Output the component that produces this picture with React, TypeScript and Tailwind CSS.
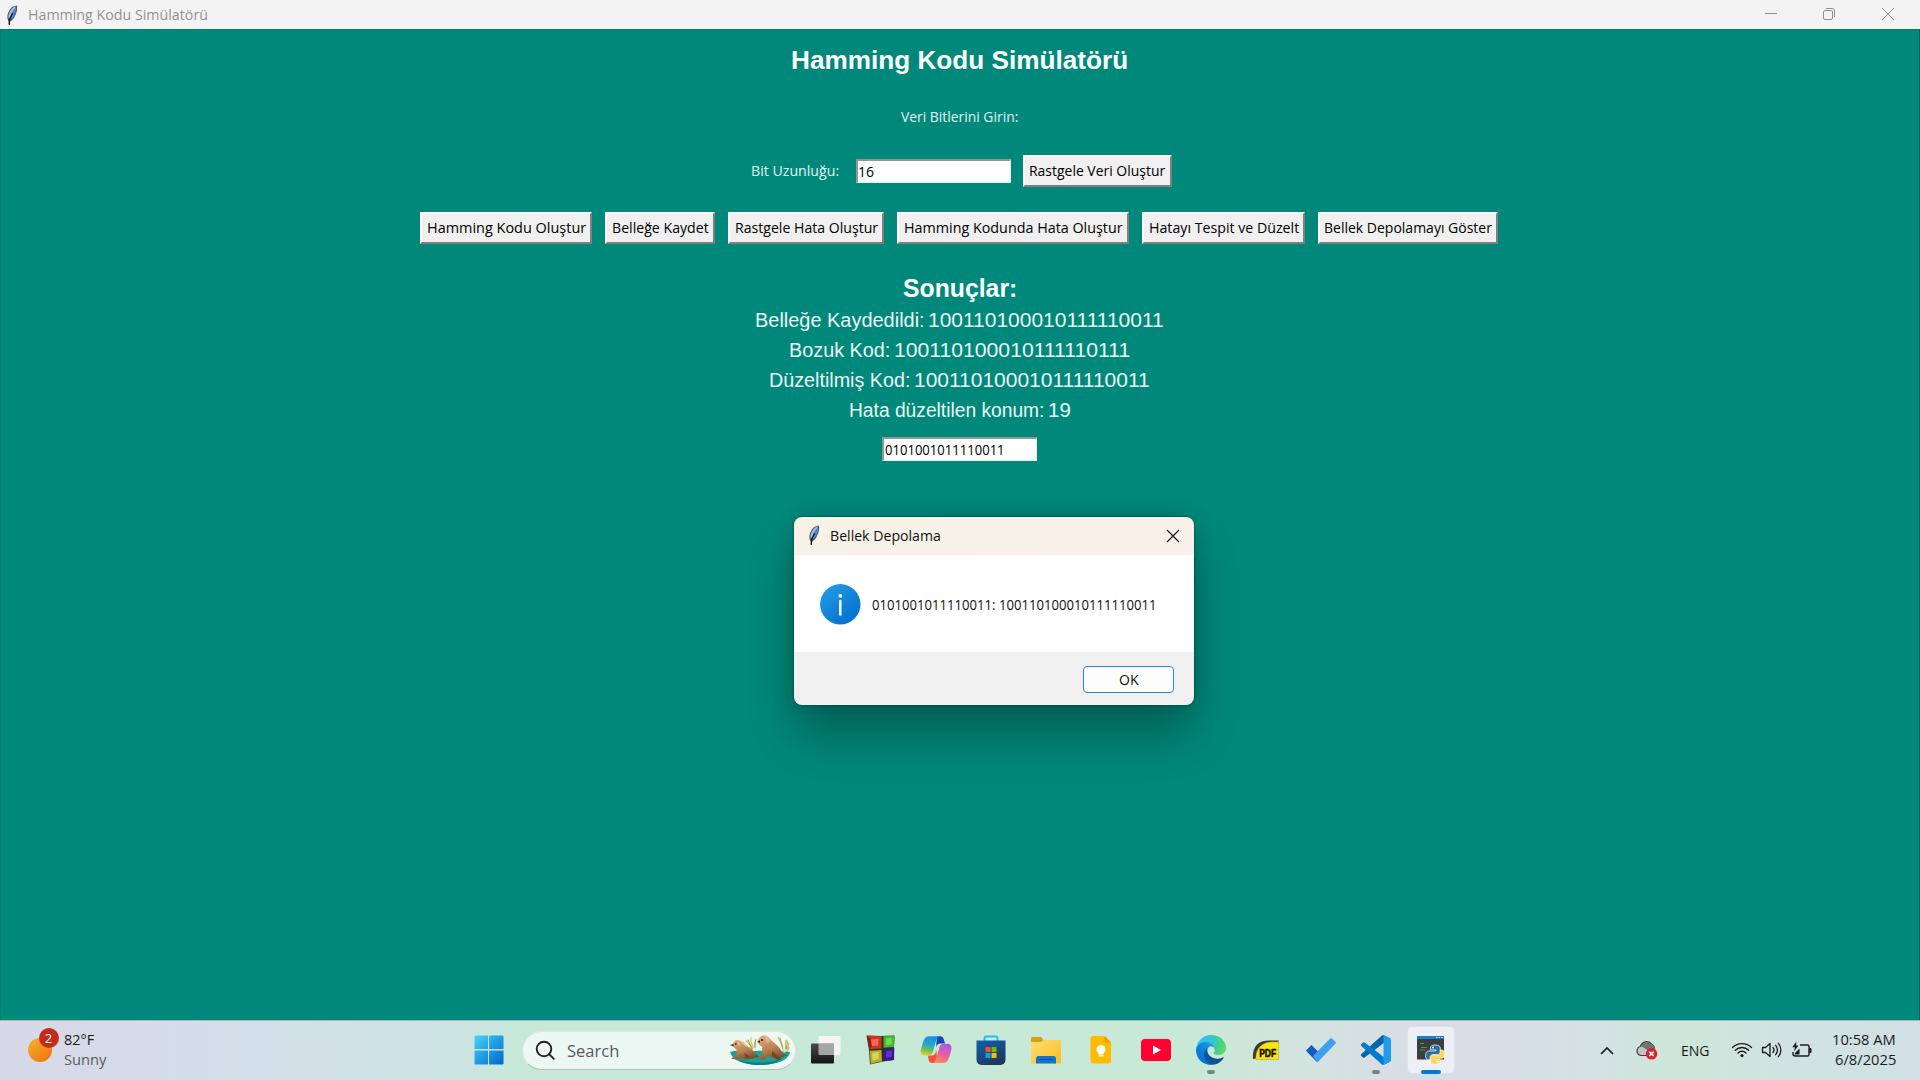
import { useLayoutEffect, useRef, useState, type ReactNode } from "react";

/* Text condensed or widened horizontally to fill a given width. */
function Fit({ w, className = "", children }: { w: number; className?: string; children: ReactNode }) {
  const ref = useRef<HTMLSpanElement>(null);
  const [scale, setScale] = useState(1);
  useLayoutEffect(() => {
    if (ref.current) setScale(w / ref.current.offsetWidth);
  }, [w]);
  return (
    <span className={`block shrink-0 text-left whitespace-nowrap ${className}`} style={{ width: w }}>
      <span ref={ref} className="inline-block origin-left" style={{ transform: `scaleX(${scale})` }}>
        {children}
      </span>
    </span>
  );
}

function Feather() {
  return (
    <svg width="14" height="22" viewBox="0 0 14 22" className="shrink-0">
      <path d="M3.800 21 4 17.500C1.600 15 2 9.800 4.600 5.900 6.400 3.100 9 1.700 12 1.500c.5 3.400-.2 7-2 10.600C8.700 14.900 7 17 5 17.600L4.800 21z" fill="#4d5560" />
      <path d="M3.800 14.800C2.800 12 4 8.500 6 5.800 7.300 4 9 2.900 10.800 2.600c-.4 3.200-3 8.400-7 12.200z" fill="#a9bfd8" />
      <path d="M5.200 15.300C5.600 10.500 8 6 11 3c.4 3-.2 6-1.600 8.700-1 1.900-2.400 3.200-4.200 3.600z" fill="#4b86d4" />
      <path d="M7.600 9C6.600 11.500 5 14 4.300 16.500v4.300" fill="none" stroke="#111" strokeWidth="1.300" />
    </svg>
  );
}

function TkButton({ w, t, children }: { w: string; t: number; children: ReactNode }) {
  return (
    <button
      className={`flex h-8 shrink-0 items-center justify-center border-2 border-t-white border-r-[#7f7f7f] border-b-[#7f7f7f] border-l-white bg-[#f0f0f0] text-[14px] leading-5 text-black ${w}`}
    >
      <Fit w={t}>{children}</Fit>
    </button>
  );
}

function TkEntry({ t, children }: { t: number; children: ReactNode }) {
  return (
    <div className="flex h-6 w-[155px] items-center border-t-2 border-r border-b border-l-2 border-t-[#8f9a98] border-r-[#e8eeee] border-b-[#e8eeee] border-l-[#8f9a98] bg-white pl-[0.5px] text-[14px] leading-5 text-black">
      <Fit w={t}>{children}</Fit>
    </div>
  );
}

function ResultLine({ label, labelWidth, value, valueWidth }: { label: string; labelWidth: number; value: string; valueWidth: number }) {
  return (
    <p className="flex gap-[4px]">
      <Fit w={labelWidth}>{label}</Fit>
      <Fit w={valueWidth}>{value}</Fit>
    </p>
  );
}

function Cell({ children, pip }: { children: ReactNode; pip?: boolean }) {
  return (
    <div className="relative flex h-[60px] w-[55px] shrink-0 items-center justify-center">
      {children}
      {pip && <span className="absolute top-[50px] left-[24px] h-1 w-2 rounded-full bg-[#7c8785]" />}
    </div>
  );
}

function StartIcon() {
  return (
    <svg width="30" height="30" viewBox="0 0 30 30">
      <defs>
        <linearGradient id="st" x1="0" y1="0" x2="1" y2="1">
          <stop offset="0" stopColor="#4fd2fb" />
          <stop offset="0.5" stopColor="#209ce4" />
          <stop offset="1" stopColor="#0068cf" />
        </linearGradient>
      </defs>
      <path fill="url(#st)" d="M1.500 .5H14v13.500H.5V1.500a1 1 0 0 1 1-1zM15 .5h13.500a1 1 0 0 1 1 1V14H15zM.5 15.500H14v14H1.500a1 1 0 0 1-1-1zM15 15.500h14.500v13a1 1 0 0 1-1 1H15z" />
    </svg>
  );
}

function Seals() {
  return (
    <svg width="62" height="32" viewBox="0 0 62 32" className="shrink-0">
      <defs>
        <linearGradient id="sl" x1="0.200" y1="0" x2="0.600" y2="1">
          <stop offset="0" stopColor="#e0ad7c" />
          <stop offset="0.550" stopColor="#bb8150" />
          <stop offset="1" stopColor="#7c4a28" />
        </linearGradient>
      </defs>
      <g fill="none" strokeWidth="1.100" strokeLinecap="round">
        <path stroke="#c9c659" d="M24 15c-2-4-5-6-7-8M24 14c-1-4-3-7-2-10M26 14c-1-4 0-6 1-9M22 15c-3-2-6-4-8-7" />
        <path stroke="#8ea548" d="M23 15c-2-3-2-6-4-9M26 13c0-4 0-5 .500-7" />
        <path stroke="#d5b650" d="M54 21c1-6-1-12-5-18M56 20c1-6 0-9 1-14M57 21c2-4 1-8 3-12M56 21c3-3 4-5 4-8" />
        <path stroke="#8ea548" d="M54 17c0-5-3-9-3-13M57 17c0-4 2-6 1-10" />
      </g>
      <path fill="#17a398" d="M1 18c5-2 12-1 20-1s27-1 40 1c-1 8-13 13-30 13S3 26 1 18z" />
      <path fill="#0d7f7c" d="M9 25.500c7 2.500 14 3 22 3s15-1 21-4c-4 4.500-12 6.500-21 6.500S13 29 9 25.500z" />
      <path fill="#e4f1ec" d="M49 13.500 61 16l-6 3zM1 16l5-3v4z" opacity=".6" />
      <path fill="url(#sl)" d="M4 11c0-3 2-5 4.500-5 3.500 0 4.500 3 7.500 5.500 5 2.500 8 4 10 7.500l4.500 4-5 .8c-5 2.200-10 2-13.500 0L8 25.500 2 24.800 7 21c.8-2 1-4 .5-5.500C6 14.500 4 13.500 4 11z" />
      <path fill="url(#sl)" d="M29 8c0-4 2.500-6.500 6-6.500S40.500 4 43 7c5 4 9 7.500 10 12l5 2.500-4 1.500c-4 1.500-8 2-12 .5L38.500 22l-3 3.500-6-.5 4-5c-1-4 0-5.500-.3-7.500C31 11.500 29 10.500 29 8z" />
      <path fill="#edc59b" d="M8 7.500c2-.5 3.500 1 4 3l-3 1zM36 3c3 0 4.500 2 5.500 4.500L38 9z" opacity=".6" />
      <circle cx="6.800" cy="9.800" r=".9" fill="#222" />
      <circle cx="33" cy="6" r="1.100" fill="#222" />
      <path fill="#3d2413" d="M1 11l3.500-1v2.500zM28 7.500l3-1V9z" />
      <path fill="#69401f" d="M15 19l6 3.500-4 1.800zM43 17l6 5-2 2.500-4-2.500zM46 23h5l1 3-4-.5z" opacity=".8" />
    </svg>
  );
}

function TaskViewIcon() {
  return (
    <svg width="30" height="30" viewBox="0 0 30 30">
      <defs>
        <linearGradient id="tv" x1="0" y1="0" x2="0" y2="1">
          <stop offset="0" stopColor="#4a4a4a" />
          <stop offset="1" stopColor="#161616" />
        </linearGradient>
      </defs>
      <rect x="0" y="8.500" width="23" height="20" rx="1" fill="url(#tv)" />
      <path d="M8.500 1h20a1 1 0 0 1 1 1v17a1 1 0 0 1-1 1H23V8.500H7.500V2a1 1 0 0 1 1-1z" fill="#f5f5f5" />
      <path d="M7.500 8.500H23V20H8.500a1 1 0 0 1-1-1z" fill="#a5a7a6" />
    </svg>
  );
}

function CubeIcon() {
  return (
    <svg width="30" height="30" viewBox="0 0 30 30">
      <path d="M.5.5 15 1l13.500-.5L28 12.500l.3.500-.3 12L17 26.500 4 29.500 3 15z" fill="#26331f" />
      <path d="M1.500 1.200C6 .3 10 1.500 15.500 1.200V13.500L3.500 14.200z" fill="#d92f20" />
      <path d="M1.500 1.200 4.500 4 5.500 11.500 3.500 14.200z" fill="#8d1d14" />
      <path d="M5 4.500 12.500 3.800 12 10.500 6 11z" fill="#ef6a55" />
      <path d="M17.500 1.200C21 1.600 25 .8 28.700 1.200L28 12 17.500 12.800z" fill="#43b92f" />
      <path d="M20 3.500 26 3 25.500 9.500 20 10z" fill="#6edb4f" />
      <path d="M3.700 15.800 15.500 15 16 26.500C12 26.500 8 28.500 4.700 29z" fill="#b3b22b" />
      <path d="M6 18 12.500 17 12.500 24 6.500 25.500z" fill="#d8d455" />
      <path d="M17.500 14.500 28 13.600 27.800 25 17.800 26z" fill="#3d1596" />
      <path d="M20 16 26 15.500 25.500 22 20 23z" fill="#5c30c4" />
    </svg>
  );
}

function CopilotIcon() {
  return (
    <svg width="32" height="30" viewBox="0 0 32 30">
      <defs>
        <linearGradient id="cp1" x1="0.500" y1="0" x2="0.300" y2="1">
          <stop offset="0" stopColor="#1b8fe6" />
          <stop offset="0.450" stopColor="#25a8c8" />
          <stop offset="0.750" stopColor="#7cc04c" />
          <stop offset="1" stopColor="#f0cf1c" />
        </linearGradient>
        <linearGradient id="cp2" x1="0.700" y1="0" x2="0.300" y2="1">
          <stop offset="0" stopColor="#a65be6" />
          <stop offset="0.500" stopColor="#e85aa6" />
          <stop offset="1" stopColor="#ff8a50" />
        </linearGradient>
      </defs>
      <path d="M17 1.200h3.500c2 0 2.800 1.500 3.500 3.800l1 3.500h-4.500c-2.500 0-3.500 1-4.500 4z" fill="#1846b8" />
      <path d="M8 20.500h4c2 0 3.500-2 4.500-5l.5 8-1.500 4.500H12c-2 0-3-1.500-3.500-3.500z" fill="#f0553a" />
      <path d="M9.500 1.200H19.500c-2.200.8-3 3-4 6.500l-2.600 9c-.8 2.600-2 3.800-4.500 3.800H5c-3.500 0-5-2.500-4-6.500l2-7C4.200 3 6.200 1.200 9.500 1.200z" fill="url(#cp1)" />
      <path d="M22.500 28H12.800c2.200-.8 3-3 4-6.500l2.500-9c.8-2.600 2-3.800 4.500-3.800h3.400c3.500 0 5 2.500 4 6.500l-2 7c-1.200 4-3.300 5.800-6.700 5.800z" fill="url(#cp2)" />
    </svg>
  );
}

function StoreIcon() {
  return (
    <svg width="30" height="30" viewBox="0 0 30 30">
      <defs>
        <linearGradient id="ms" x1="0" y1="0" x2="0.600" y2="1">
          <stop offset="0" stopColor="#0d63b0" />
          <stop offset="1" stopColor="#20365f" />
        </linearGradient>
      </defs>
      <path d="M8.500 7V3a1.500 1.500 0 0 1 1.500-1.500h10A1.500 1.500 0 0 1 21.500 3v4" fill="none" stroke="#22bdf2" strokeWidth="2" />
      <path d="M.5 5.500h29V25a5 5 0 0 1-5 5h-19a5 5 0 0 1-5-5z" fill="url(#ms)" />
      <path d="M9.500 12h5v5h-5z" fill="#f25022" />
      <path d="M15.500 12h5v5h-5z" fill="#7fba00" />
      <path d="M9.500 18h5v5h-5z" fill="#00a4ef" />
      <path d="M15.500 18h5v5h-5z" fill="#ffb900" />
    </svg>
  );
}

function FolderIcon() {
  return (
    <svg width="30" height="30" viewBox="0 0 30 30">
      <defs>
        <linearGradient id="fd" x1="0" y1="0" x2="1" y2="1">
          <stop offset="0" stopColor="#ffdf75" />
          <stop offset="1" stopColor="#fcbc1e" />
        </linearGradient>
      </defs>
      <path d="M0 8V3.500A1.500 1.500 0 0 1 1.500 2H9c1 0 1.500.3 2 1l1 2h17a1 1 0 0 1 1 1v4z" fill="#dd9f09" />
      <path d="M0 7h10l2.500-2H29a1 1 0 0 1 1 1v21.500a1 1 0 0 1-1 1H1a1 1 0 0 1-1-1z" fill="url(#fd)" />
      <path d="M5 28.500v-5A2.500 2.500 0 0 1 7.500 21h15a2.500 2.500 0 0 1 2.500 2.500v5z" fill="#1275cd" />
      <path d="M8.500 24.500h13" stroke="#0a4f97" strokeWidth="1.200" />
    </svg>
  );
}

function KeepIcon() {
  return (
    <svg width="22" height="30" viewBox="0 0 22 30">
      <path d="M3 1h11.500l6.500 6.500V26a2.500 2.500 0 0 1-2.500 2.500H3A2.500 2.500 0 0 1 .5 26V3.500A2.500 2.500 0 0 1 3 1z" fill="#ffbb00" />
      <path d="M14.500 1 21 7.500h-6.500z" fill="#f29900" />
      <circle cx="11" cy="14.500" r="4.500" fill="#fff" />
      <path d="M8.500 17h5v2.500h-5zM8.500 20.300h5v1.200h-5z" fill="#fff" />
    </svg>
  );
}

function YouTubeIcon() {
  return (
    <svg width="30" height="22" viewBox="0 0 30 22">
      <rect width="30" height="22" rx="4" fill="#ff0033" />
      <path d="M12 6.500 20 11l-8 4.500z" fill="#fff" />
    </svg>
  );
}

function EdgeIcon() {
  return (
    <svg width="30" height="30" viewBox="0 0 256 256">
      <defs>
        <linearGradient id="e1" x1="60" y1="177" x2="241" y2="177" gradientUnits="userSpaceOnUse">
          <stop offset="0" stopColor="#0c59a4" />
          <stop offset="1" stopColor="#114a8b" />
        </linearGradient>
        <linearGradient id="e2" x1="158" y1="100" x2="46" y2="222" gradientUnits="userSpaceOnUse">
          <stop offset="0" stopColor="#1b9de2" />
          <stop offset="0.160" stopColor="#1595df" />
          <stop offset="0.670" stopColor="#0680d7" />
          <stop offset="1" stopColor="#0078d4" />
        </linearGradient>
        <radialGradient id="e3" cx="26" cy="45" r="230" gradientUnits="userSpaceOnUse">
          <stop offset="0" stopColor="#35c1f1" />
          <stop offset="0.400" stopColor="#2fc2df" />
          <stop offset="0.750" stopColor="#42cf9a" />
          <stop offset="1" stopColor="#5fdc5a" />
        </radialGradient>
      </defs>
      <path fill="url(#e1)" d="M231 190.500c-3.400 1.800-6.900 3.400-10.500 4.700a101.700 101.700 0 0 1-35.900 6.500c-47.300 0-88.500-32.500-88.500-74.300a31.500 31.500 0 0 1 16.400-27.300c-42.800 1.800-53.800 46.400-53.800 72.500 0 74 68.100 81.400 82.800 81.400 7.900 0 19.800-2.300 27-4.600l1.300-.4a128.300 128.300 0 0 0 66.600-52.800 4 4 0 0 0-5.400-5.700z" />
      <path fill="url(#e2)" d="M105.700 241.400a79.200 79.200 0 0 1-22.700-21.300 80.700 80.700 0 0 1 29.500-120c3.200-1.500 8.500-4.100 15.600-4a32.400 32.400 0 0 1 25.700 13 31.900 31.900 0 0 1 6.300 18.700c0-.2 24.500-79.600-80-79.600-43.900 0-80 41.700-80 78.200a130.200 130.200 0 0 0 12.100 56 128 128 0 0 0 156.400 67 75.500 75.500 0 0 1-62.800-8z" />
      <path fill="url(#e3)" d="M152.300 148.900c-.8 1-3.300 2.500-3.300 5.600 0 2.600 1.700 5.200 4.800 7.300 14.600 10.100 42 8.800 42.100 8.800a60.200 60.200 0 0 0 30.600-8.500A61.900 61.900 0 0 0 257 109c.3-22.400-8-37.300-11.300-43.900C224.500 23.600 178.700 0 128.800 0A128 128 0 0 0 .8 126.200c.5-36.500 36.800-66 80-66 3.500 0 23.500.3 42 10a72.600 72.600 0 0 1 30.900 29.300c6.100 10.600 7.200 24.100 7.200 29.500s-2.700 13.300-8.600 19.900z" />
    </svg>
  );
}

function PdfIcon() {
  return (
    <svg width="30" height="30" viewBox="-1 -4 30 30" className="-mt-px overflow-visible">
      <path d="M1 20C0 8 6 1.500 17 1.500h9.500v3L6 19z" fill="#3a3a36" />
      <path d="M4 20.500C3 10 10 3 20 3h6.500v17.500z" fill="#ffe60a" stroke="#b9a812" strokeWidth=".6" />
      <text x="7.200" y="17.500" fontFamily="Liberation Sans, sans-serif" fontWeight="900" fontSize="11" textLength="17" lengthAdjust="spacingAndGlyphs" fill="#161200" stroke="#161200" strokeWidth=".6">
        PDF
      </text>
    </svg>
  );
}

function TodoIcon() {
  return (
    <svg width="30" height="26" viewBox="0 0 30 26">
      <path d="M.7 12.700 5.500 8 16.500 19 11.800 24.500a1 1 0 0 1-1.400 0L.7 14.500a1.200 1.200 0 0 1 0-1.800z" fill="#185abd" />
      <path d="M7 19 24.200 1.500a1.200 1.200 0 0 1 1.700-.1l3.600 3.300a1.200 1.200 0 0 1 .1 1.700L12.200 24.700a1 1 0 0 1-1.400 0z" fill="#41a0ee" />
    </svg>
  );
}

function VsCodeIcon() {
  return (
    <svg width="30" height="30" viewBox="0 0 100 100">
      <path d="M96.500 10.800 75.900.9a6.200 6.200 0 0 0-7.100 1.200L1.300 63.600a4.200 4.200 0 0 0 0 6.200l5.500 5a4.200 4.200 0 0 0 5.300.2l81.200-61.600c2.700-2 6.600-.1 6.600 3.300v-.2a6.200 6.200 0 0 0-3.400-5.700z" fill="#0065a9" />
      <path d="m96.500 89.200-20.600 9.900a6.200 6.200 0 0 1-7.100-1.200L1.300 36.400a4.200 4.200 0 0 1 0-6.200l5.500-5a4.200 4.200 0 0 1 5.300-.2l81.200 61.600c2.700 2 6.600.1 6.600-3.300v.2a6.200 6.200 0 0 1-3.400 5.700z" fill="#007acc" />
      <path d="M75.900 99.100a6.200 6.200 0 0 1-7.100-1.200c2.300 2.300 6.200.7 6.200-2.600V4.700c0-3.300-3.900-4.900-6.200-2.600A6.200 6.200 0 0 1 75.900.9l20.600 9.900a6.200 6.200 0 0 1 3.500 5.600v67.200a6.200 6.200 0 0 1-3.500 5.600z" fill="#1f9cf0" />
    </svg>
  );
}

function PythonIcon() {
  return (
    <svg width="30" height="30" viewBox="0 0 30 30">
      <rect x="1" y="1" width="27" height="23.500" fill="#3b3d40" />
      <rect x="1" y="1" width="27" height="3" fill="#1a7ec9" />
      <path d="M20 2.500h1.500M22.500 2.500H24M25 2.500h1.500" stroke="#bfe0f7" strokeWidth="1" />
      <path d="M4 8.500h4M5 12.500h6M4 15h5" stroke="#4f9a4a" strokeWidth="1" />
      <g stroke="#fff" strokeWidth=".7">
        <path d="M19 10c-4 0-4.500 1.500-4.500 3v2H20v1h-7.500c-2 0-3 1.800-3 4.500s1 4.300 2.800 4.300H14V22.500c0-1.800 1.400-3 3-3h4.800c1.400 0 2.500-1.100 2.500-2.600V13c0-2-1.800-3-5.300-3z" fill="#2f6ea5" />
        <path d="M19.500 29.300c4 0 4.600-1.500 4.600-3v-2h-5.300v-1h7c2 0 2.700-1.800 2.700-4.200s-.8-4.100-2.500-4.100h-1.700v2.200c0 1.700-1.300 2.800-2.900 2.800h-4.500c-1.400 0-2.400 1.100-2.400 2.500v3.800c0 2 1.700 3 5 3z" fill="#ffd647" />
      </g>
      <circle cx="17" cy="12.500" r=".9" fill="#fff" />
      <circle cx="21.700" cy="26.700" r=".9" fill="#fff" />
    </svg>
  );
}

function CloudIcon() {
  return (
    <svg width="22" height="20" viewBox="0 0 22 20">
      <path d="M5 15.500a4.600 4.600 0 0 1-.6-9A6.500 6.500 0 0 1 16 4.500a5 5 0 0 1 2.500 4.500l-6 6.500z" fill="#c4c4c4" stroke="#3f3f3f" strokeWidth="1.200" />
      <path d="M5 6a6.200 6.200 0 0 1 10.500-1.500c2.500.3 3.500 3 3 5L13 11z" fill="#727272" />
      <circle cx="15.500" cy="13.800" r="5.800" fill="#e0222e" />
      <path d="m13.300 11.600 4.400 4.400m0-4.400-4.400 4.400" stroke="#fff" strokeWidth="1.500" />
    </svg>
  );
}

function WifiIcon() {
  return (
    <svg width="22" height="18" viewBox="0 0 22 18" fill="none" stroke="#1b1b1b" strokeWidth="1.400" strokeLinecap="round">
      <path d="M1.500 6.500a13.500 13.500 0 0 1 19 0M4.300 9.300a9.500 9.500 0 0 1 13.400 0M7 12a5.600 5.600 0 0 1 8 0" />
      <circle cx="11" cy="14.600" r="1.600" fill="#1b1b1b" stroke="none" />
    </svg>
  );
}

function VolumeIcon() {
  return (
    <svg width="22" height="18" viewBox="0 0 22 18" fill="none" stroke="#1b1b1b" strokeWidth="1.300" strokeLinecap="round" strokeLinejoin="round">
      <path d="M1.500 6.500h3L9 2.500v13l-4.500-4h-3z" />
      <path d="M12 6.500a4 4 0 0 1 0 5M14.700 4.300a7.200 7.200 0 0 1 0 9.400M17.400 2.300a10.300 10.300 0 0 1 0 13.400" />
    </svg>
  );
}

function BatteryIcon() {
  return (
    <svg width="22" height="18" viewBox="0 0 22 18" fill="none" stroke="#1b1b1b" strokeWidth="1.400">
      <path d="M9 4h7.500A1.500 1.500 0 0 1 18 5.500v8a1.500 1.500 0 0 1-1.500 1.500h-12A2.500 2.500 0 0 1 2 12.500V11" />
      <path d="M18.800 7.500h1.200v4h-1.200z" fill="#1b1b1b" strokeWidth="1" />
      <path d="M4 13.500V12l4.500-4.500v6z" fill="#1b1b1b" stroke="none" />
      <path d="M5.500 .5 1.200 6.300H4L3 10.500l4.500-6H5z" fill="#1b1b1b" stroke="none" />
    </svg>
  );
}

function TitleBar() {
  return (
    <header className="flex h-[29px] shrink-0 items-center justify-between bg-[#f3f3f3]">
      <div className="flex items-center pl-[5px]">
        <Feather />
        <Fit w={180} className="ml-[9px] text-[14px] leading-5 text-[#929292]">
          Hamming Kodu Simülatörü
        </Fit>
      </div>
      <svg width="156" height="29" viewBox="0 0 156 29" fill="none" stroke="#8f8f8f">
        <path d="M1 13.500h12" />
        <rect x="59.500" y="10.500" width="9" height="9" rx="1.500" />
        <path d="M62 8.500h6a2.500 2.500 0 0 1 2.500 2.500v6" />
        <path d="m118 8 12 12m0-12-12 12" />
      </svg>
    </header>
  );
}

function Dialog() {
  return (
    <div className="absolute top-[517px] left-[794px] flex h-[188px] w-[400px] flex-col overflow-hidden rounded-lg shadow-[0_0_1px_1px_rgba(0,70,62,0.5),0_30px_50px_rgba(0,0,0,0.3),0_0px_20px_rgba(0,0,0,0.14)]">
      <div className="flex h-[38px] shrink-0 items-center bg-linear-to-r from-[#f7f2e8] to-[#f9f0ea] pr-[14px] pl-[13px]">
        <span className="-mt-[2px]">
          <Feather />
        </span>
        <Fit w={111} className="ml-[9px] text-[14px] leading-5 text-[#111]">
          Bellek Depolama
        </Fit>
        <svg width="14" height="14" viewBox="0 0 14 14" className="ml-auto" stroke="#111" strokeWidth="1.100">
          <path d="m1 1 12 12m0-12L1 13" />
        </svg>
      </div>
      <div className="flex h-[97px] shrink-0 items-center bg-white pl-[26px]">
        <svg width="41" height="41" viewBox="0 0 41 41" className="mt-px shrink-0">
          <defs>
            <linearGradient id="inf" x1="0.150" y1="0.100" x2="0.800" y2="0.900">
              <stop offset="0" stopColor="#2099e3" />
              <stop offset="1" stopColor="#0671cf" />
            </linearGradient>
          </defs>
          <circle cx="20.300" cy="20.300" r="20.200" fill="url(#inf)" />
          <circle cx="20.300" cy="11.800" r="1.900" fill="#fff" />
          <path d="M20.300 17v13.500" stroke="#fff" strokeWidth="2.400" strokeLinecap="round" />
        </svg>
        <Fit w={285} className="mt-[3px] ml-[11px] text-[14px] leading-5 text-[#111]">
          0101001011110011: 100110100010111110011
        </Fit>
      </div>
      <div className="flex flex-1 items-center justify-end bg-[#f0f0f0] pr-5">
        <button className="mt-px flex h-[27px] w-[91px] items-center justify-center rounded-[4px] border-[1.500px] border-[#2a86d3] bg-[#fdfdfd] pt-px text-[14px] leading-5 text-[#111]">
          <Fit w={19}>OK</Fit>
        </button>
      </div>
    </div>
  );
}

function Taskbar() {
  return (
    <footer className="flex h-[60px] shrink-0 border-t border-[#a9b7b8] bg-[linear-gradient(90deg,#d6dae6_0px,#d5dce7_150px,#d2e0e8_300px,#cce2e4_430px,#c7e8d9_520px,#c6e9d7_800px,#c8e9d6_1180px,#d2e4dd_1290px,#d8dee6_1400px,#d8dde8_1480px,#d5e1e4_1590px,#cde6d9_1670px,#d0e4df_1750px,#d0e0e6_1920px)]">
      <div className="-mt-px flex w-[461px] shrink-0 items-center pl-[28px]">
        <div className="relative -mt-px size-6 rounded-full bg-linear-to-br from-[#efb52b] to-[#f26b0c]">
          <span className="absolute -top-[10px] left-[10.500px] flex size-5 items-center justify-center rounded-full bg-[#c42b1c] text-[13px] leading-5 text-white">2</span>
        </div>
        <div className="ml-[12px] flex flex-col text-[14px] leading-5">
          <Fit w={30} className="text-[#1b1b1b]">82°F</Fit>
          <Fit w={42} className="text-[#555b61]">Sunny</Fit>
        </div>
      </div>
      <div className="-mt-px flex items-center">
        <Cell>
          <StartIcon />
        </Cell>
        <div className="ml-[6px] flex h-[39px] w-[274px] items-center rounded-full border border-b-[#a9c4b8] border-[#d6e6df] bg-[#edf7f3] pr-[4px] pl-[12px]">
          <svg width="20" height="20" viewBox="0 0 20 20" fill="none" stroke="#222" strokeWidth="1.900" className="shrink-0">
            <circle cx="9" cy="9" r="7.300" />
            <path d="m14.200 14.200 4.600 4.600" strokeLinecap="round" />
          </svg>
          <Fit w={52} className="mt-px ml-[12px] text-[16.500px] leading-6 text-[#555c59]">Search</Fit>
          <span className="ml-auto">
            <Seals />
          </span>
        </div>
        <div className="ml-[2px] flex">
          <Cell><TaskViewIcon /></Cell>
          <Cell><CubeIcon /></Cell>
          <Cell><CopilotIcon /></Cell>
          <Cell><StoreIcon /></Cell>
          <Cell><FolderIcon /></Cell>
          <Cell><KeepIcon /></Cell>
          <Cell><YouTubeIcon /></Cell>
          <Cell pip><EdgeIcon /></Cell>
          <Cell><PdfIcon /></Cell>
          <Cell><TodoIcon /></Cell>
          <Cell pip><VsCodeIcon /></Cell>
          <div className="relative mt-[6px] ml-[4px] flex h-12 w-12 items-center justify-center rounded-[5px] border border-[#dde2e6] bg-[#eceff3]">
            <PythonIcon />
            <span className="absolute top-[43px] left-[13px] h-1 w-5 rounded-full bg-[#0078d4]" />
          </div>
        </div>
      </div>
      <div className="-mt-px ml-auto flex items-center pr-[24px]">
        <svg width="14" height="9" viewBox="0 0 14 9" fill="none" stroke="#1b1b1b" strokeWidth="1.700">
          <path d="M1 8l6-6 6 6" />
        </svg>
        <div className="ml-[22px]"><CloudIcon /></div>
        <Fit w={29} className="mt-px ml-[23px] text-[14px] leading-5 text-[#1b1b1b]">ENG</Fit>
        <div className="ml-[21px] flex gap-2">
          <WifiIcon />
          <VolumeIcon />
          <BatteryIcon />
        </div>
        <div className="ml-[19px] flex flex-col items-end text-[14px] leading-5 text-[#1b1b1b]">
          <Fit w={64}>10:58 AM</Fit>
          <Fit w={61}>6/8/2025</Fit>
        </div>
      </div>
    </footer>
  );
}

export default function App() {
  return (
    <div className="relative flex h-[1080px] w-[1920px] flex-col overflow-hidden bg-[#00897b] font-['Open_Sans','Noto_Sans',sans-serif]">
      <TitleBar />
      <main className="flex flex-1 flex-col items-center border-t border-r border-l border-t-[#057a6e] border-r-[#075e55] border-l-[#057a6e]">
        <h1 className="mt-[15px] mr-px font-['Liberation_Sans',sans-serif] text-[26px] leading-[30px] font-bold text-white">
          <Fit w={337}>Hamming Kodu Simülatörü</Fit>
        </h1>
        <Fit w={117} className="mt-[32px] mr-px text-[14px] leading-5 text-[#e3f2f0]">
          Veri Bitlerini Girin:
        </Fit>
        <div className="mt-[28px] ml-[2px] flex h-8 items-center">
          <Fit w={88} className="mr-[17px] text-[14px] leading-5 text-[#e3f2f0]">
            Bit Uzunluğu:
          </Fit>
          <TkEntry t={16}>16</TkEntry>
          <span className="w-[12px]" />
          <TkButton w="w-[149px]" t={136.500}>Rastgele Veri Oluştur</TkButton>
        </div>
        <div className="mt-[25px] mr-[2px] flex gap-[13px]">
          <TkButton w="w-[172px]" t={159}>Hamming Kodu Oluştur</TkButton>
          <TkButton w="w-[110px]" t={97}>Belleğe Kaydet</TkButton>
          <TkButton w="w-[156px]" t={143}>Rastgele Hata Oluştur</TkButton>
          <TkButton w="w-[232px]" t={219}>Hamming Kodunda Hata Oluştur</TkButton>
          <TkButton w="w-[163px]" t={150}>Hatayı Tespit ve Düzelt</TkButton>
          <TkButton w="w-[180px]" t={168}>Bellek Depolamayı Göster</TkButton>
        </div>
        <section className="mt-[29px] mr-px flex flex-col items-center font-['Liberation_Sans',sans-serif] text-[20px] leading-[30px] text-[#edf7f5]">
          <h2 className="mb-[2px] text-[25px] leading-[30px] font-bold text-white">
            <Fit w={114}>Sonuçlar:</Fit>
          </h2>
          <ResultLine label="Belleğe Kaydedildi:" labelWidth={169.500} value="100110100010111110011" valueWidth={236} />
          <ResultLine label="Bozuk Kod:" labelWidth={101} value="100110100010111110111" valueWidth={236} />
          <ResultLine label="Düzeltilmiş Kod:" labelWidth={141} value="100110100010111110011" valueWidth={236} />
          <ResultLine label="Hata düzeltilen konum:" labelWidth={195} value="19" valueWidth={22.500} />
        </section>
        <div className="mt-[12px] mr-px">
          <TkEntry t={119.500}>0101001011110011</TkEntry>
        </div>
      </main>
      <Taskbar />
      <Dialog />
    </div>
  );
}
